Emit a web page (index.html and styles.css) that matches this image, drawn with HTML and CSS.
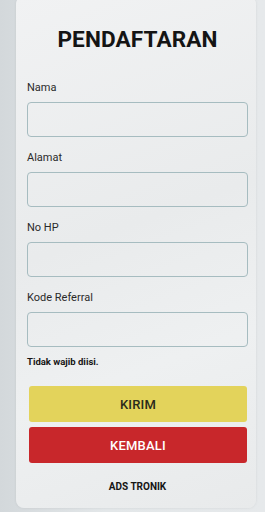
FILE: index.html
```html
<!DOCTYPE html>
<html lang="id">
<head>
  <meta charset="UTF-8">
  <title>Pendaftaran</title>
  <link rel="stylesheet" href="styles.css">
</head>
<body>
  <div class="card">
    <h1 class="title">PENDAFTARAN</h1>

    <div class="field">
      <label class="label">Nama</label>
      <input class="input" type="text">
    </div>
    <div class="field">
      <label class="label">Alamat</label>
      <input class="input" type="text">
    </div>
    <div class="field">
      <label class="label">No HP</label>
      <input class="input" type="text">
    </div>
    <div class="field">
      <label class="label">Kode Referral</label>
      <input class="input" type="text">
    </div>
    <p class="hint">Tidak wajib diisi.</p>

    <div class="buttons">
      <button class="btn btn-kirim">KIRIM</button>
      <button class="btn btn-kembali">KEMBALI</button>
    </div>
    <p class="footer">ADS TRONIK</p>
  </div>
</body>
</html>
```

FILE: styles.css
```css
body{
  margin: 0;
  padding: 0;
  width: 265px;
  height: 512px;
  overflow: hidden;
  background: linear-gradient(90deg, #d3d8db 0%, #e3e7e9 40%, #e6e9eb 100%);
  font-family: Roboto, "Liberation Sans", sans-serif;
}
.card{
  margin: -4px 9px 0 16px;
  height: 512px;
  box-sizing: border-box;
  padding: 30px 8px 0 11px;
  border-radius: 8px;
  background: linear-gradient(160deg, #f1f2f3 0%, #e9ebec 45%, #eef0f1 70%, #e8eaeb 100%);
  box-shadow: 0 0 3px rgba(0,0,0,0.08);
  display: flex;
  flex-direction: column;
}
.title{
  margin: 0 0 28px;
  font-size: 22.6px;
  line-height: 27px;
  font-weight: 700;
  text-align: center;
  color: #141414;
  letter-spacing: 0.1px;
}
.field{
  display: flex;
  flex-direction: column;
  gap: 7px;
  margin-bottom: 14px;
}
.field:nth-of-type(4){
  margin-bottom: 0;
}
.label{
  font-size: 11px;
  line-height: 14px;
  color: #2a2a2a;
}
.input{
  height: 35px;
  box-sizing: border-box;
  margin: 0;
  border: 1px solid #a6bcc0;
  border-radius: 4px;
  background: transparent;
}
.hint{
  margin: 9px 0 0;
  font-size: 9.5px;
  line-height: 12px;
  font-weight: 700;
  color: #151515;
}
.buttons{
  display: flex;
  flex-direction: column;
  gap: 5px;
  margin: 18px 1px 0 2px;
}
.btn{
  height: 36px;
  border: none;
  border-radius: 3px;
  font-family: Roboto, "Liberation Sans", sans-serif;
  font-size: 13px;
  font-weight: 500;
  letter-spacing: 0.2px;
}
.btn-kirim{
  background: #e3d35b;
  color: #2a2a1a;
}
.btn-kembali{
  background: #c8272b;
  color: #ffffff;
}
.footer{
  margin: 18px 0 0;
  font-size: 10px;
  line-height: 12px;
  font-weight: 700;
  text-align: center;
  color: #151515;
}
```
